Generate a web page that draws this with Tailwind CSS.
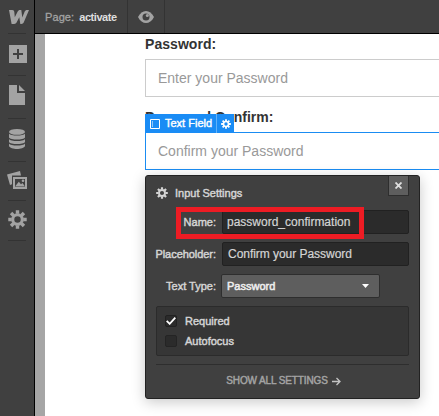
<!DOCTYPE html>
<html lang="en">
<head>
<meta charset="utf-8">
<title>Page: activate</title>
<script src="https://cdn.jsdelivr.net/npm/@tailwindcss/browser@4"></script>
</head>
<body class="w-[439px] h-[416px] overflow-hidden bg-white font-['Liberation_Sans',Arial,sans-serif]">
<svg class="hidden">
  <symbol id="gear" viewBox="0 0 20 20"><g fill="none" stroke="currentColor"><circle cx="10" cy="10" r="5" stroke-width="3.2"/><path stroke-width="3.6" d="M10 .3V4M10 16v3.7M.3 10H4M16 10h3.7M3.2 3.2l2.6 2.6M14.2 14.2l2.6 2.6M3.2 16.8l2.6-2.6M14.2 5.8l2.6-2.6"/></g></symbol>
</svg>
<div class="flex w-full h-full">
  <aside class="flex flex-col w-[35px] shrink-0 h-full bg-[#404040] border-r border-black text-[#a3a3a3]">
    <div class="h-[33px] pt-[10px] pl-[9px]">
      <svg class="w-5 h-[14px]" viewBox="0 0 20 14" fill="currentColor"><path d="M0 0h3.2c1.4 0 2 .8 2.1 2l.5 5.300L8.700 1.600C9.200.5 9.900 0 11 0h1.300l1 7.500L15.600 1.700C16.100.5 17 0 18.200 0H20l-5.200 12.300c-.5 1.200-1.300 1.700-2.500 1.700h-1L10.300 7.200 7.700 12.300C7.100 13.500 6.400 14 5.200 14H2.600z"/></svg>
    </div>
    <div class="h-px w-[18px] ml-2 bg-[#333]"></div>
    <div class="h-[41px] pt-[11px] pl-[9px]">
      <svg class="w-[18px] h-[18px]" viewBox="0 0 18 18"><path fill="currentColor" d="M0 0h18v18H0z"/><path stroke="#404040" stroke-width="2" d="M9 4v10M4 9h10"/></svg>
    </div>
    <div class="h-px w-[18px] ml-2 bg-[#333]"></div>
    <div class="h-[42px] pt-[9px] pl-[9px]">
      <svg class="w-4 h-5" viewBox="0 0 16 20" fill="currentColor"><path d="M0 0h8v8h8v12H0zM10 0l6 6h-6z"/></svg>
    </div>
    <div class="h-px w-[18px] ml-2 bg-[#333]"></div>
    <div class="h-[42px] pt-[10px] pl-[9px]">
      <svg class="w-4 h-5" viewBox="0 0 16 20" fill="currentColor"><ellipse cx="8" cy="2.900" rx="8" ry="2.900"/><path d="M0 4.500c1.500 2.800 14.500 2.800 16 0v4C14.500 11.300 1.500 11.300 0 8.500zM0 10c1.500 2.800 14.500 2.800 16 0v3c-1.500 2.800-14.500 2.800-16 0zM0 14.500c1.500 2.800 14.500 2.800 16 0V17c-1.500 4-14.500 4-16 0z"/></svg>
    </div>
    <div class="h-px w-[18px] ml-2 bg-[#333]"></div>
    <div class="h-[38px] pt-[9px] pl-[7px]">
      <svg class="w-5 h-[19px]" viewBox="0 0 20 19"><path fill="currentColor" d="M0 3.500 13 0l1 4.500H5v8.800L3 14z"/><rect x="7" y="7" width="12" height="10" fill="none" stroke="currentColor" stroke-width="2"/><path fill="currentColor" d="m8 15.500 3.800-4.800 2.200 2.500 1.500-1.200 2.500 3.500z"/><circle cx="16" cy="9.800" r="1.300" fill="currentColor"/></svg>
    </div>
    <div class="h-px w-[18px] ml-2 bg-[#333]"></div>
    <div class="h-[39px] pt-[9px] pl-2"><svg class="w-[19px] h-[19px]"><use href="#gear"/></svg></div>
    <div class="h-px w-[18px] ml-2 bg-[#333]"></div>
  </aside>
  <div class="flex flex-col flex-1 min-w-0">
    <header class="flex h-[34px] shrink-0 bg-[#404040] border-b border-black text-xs">
      <div class="flex items-center w-[93px] pl-[10px] pt-px border-r border-[#333] text-[11px] whitespace-pre"><span class="text-[#a3a3a3] tracking-[.1px] [-webkit-text-stroke:.3px]">Page:</span><span class="ml-[5px] text-[#dedede] font-bold tracking-[-.45px]">activate</span></div>
      <div class="flex items-center justify-center w-[37px] border-r border-[#333] text-[#a3a3a3]">
        <svg class="w-4 h-3" viewBox="0 0 16 12"><path fill="currentColor" d="M0 6c4-8 12-8 16 0-4 8-12 8-16 0z"/><circle cx="8" cy="6" r="3.500" fill="#404040"/><circle cx="9.300" cy="4.500" r="1.500" fill="currentColor"/></svg>
      </div>
    </header>
    <div class="flex flex-1">
      <div class="w-[10px] bg-[#a6a6a6]"></div>
      <main class="relative flex-1 pl-[100px] text-sm text-[#333]">
        <div class="h-[25px] pt-[1px] leading-[18px] font-bold tracking-[.05px]">Password:</div>
        <div class="h-[38px] border border-r-0 border-[#ccc] pl-3 leading-[36px] text-[#999]">Enter your Password</div>
        <div class="h-[35px] pt-[11px] leading-[18px] font-bold">Password Confirm:</div>
        <div class="h-[38px] border border-r-0 border-[#1a8cf2] pl-3 leading-[36px] text-[#999]">Confirm your Password</div>

        <div class="absolute left-[100px] top-[80px] flex w-[89px] h-[19px] bg-[#1a8cf5] text-white items-center text-[11px]">
          <svg class="ml-[5px] w-[10px] h-[10px]" viewBox="0 0 10 10" fill="none" stroke="#fff"><path d="M.5.5h9v9h-9z"/><path d="M2.500 2v6" stroke-opacity=".5"/></svg>
          <span class="ml-[5px] w-[51px] whitespace-nowrap [-webkit-text-stroke:.4px]">Text Field</span>
          <i class="w-px h-full bg-[#62b2fa]"></i>
          <svg class="ml-1 w-[10px] h-[10px]"><use href="#gear"/></svg>
        </div>

        <section class="absolute left-[100px] top-[141px] w-[275px] h-[224px] rounded-[3px] border border-[#222] bg-[#404040] shadow-[0_3px_14px_rgba(0,0,0,.22)] text-[#d4d4d4] text-[11px] [-webkit-text-stroke:.45px]">
          <div class="flex h-[34px] pl-[10px] pr-[10px]">
            <svg class="mt-[11px] w-3 h-3"><use href="#gear"/></svg>
            <h2 class="ml-[7px] pt-[10px] leading-[14px] flex-1">Input Settings</h2>
            <button class="flex items-center justify-center w-[21px] h-5 bg-[#5e5e5e] border border-t-0 border-[#2e2e2e]"><svg class="w-[7px] h-[7px]" viewBox="0 0 7 7"><path stroke="#e0e0e0" stroke-width="1.800" d="m.5.5 6 6M6.500.5l-6 6"/></svg></button>
          </div>
          <div class="flex h-6 mr-[10px] leading-6"><label class="w-[70px] text-right mr-[6px]">Name:</label><div class="flex-1 rounded-[2px] bg-[#2b2b2b] border border-[#212121] pl-1 text-xs leading-[22px] [-webkit-text-stroke:.2px]">password_confirmation</div></div>
          <div class="flex h-6 mt-2 mr-[10px] leading-6"><label class="w-[70px] whitespace-nowrap text-right tracking-[-.05px] mr-[6px]">Placeholder:</label><div class="flex-1 rounded-[2px] bg-[#2b2b2b] border border-[#212121] pl-[5px] text-xs leading-[22px] tracking-[-.04px] [-webkit-text-stroke:.2px]">Confirm your Password</div></div>
          <div class="flex h-6 mt-2 leading-6"><label class="w-[70px] text-right mr-[5px]">Text Type:</label><div class="flex w-[159px] items-center justify-between rounded-[2px] bg-[#5e5e5e] border border-[#2e2e2e] pl-[5px] pr-[10px] leading-[22px] text-[#eee] [-webkit-text-stroke:.5px]">Password<svg class="w-[7px] h-1" viewBox="0 0 7 4"><path fill="#fff" d="M0 0h7L3.500 4z"/></svg></div></div>
          <div class="mt-2 mx-[10px] h-[50px] rounded-[2px] border border-[#2b2b2b] bg-[#363636] pl-2 pt-2">
            <div class="flex items-center h-3"><span class="flex items-center justify-center w-3 h-3 rounded-[2px] bg-[#2b2b2b] border border-[#212121]"><svg class="w-[10px] h-2 shrink-0" viewBox="0 0 10 8"><path fill="none" stroke="#fff" stroke-width="1.800" d="m.7 3.800 3 3L9.300.7"/></svg></span><span class="ml-2 pt-px">Required</span></div>
            <div class="flex items-center h-3 mt-2"><span class="w-3 h-3 rounded-[2px] bg-[#2b2b2b] border border-[#242424]"></span><span class="ml-2 pt-px">Autofocus</span></div>
          </div>
          <div class="mt-2 mx-[10px] h-px bg-[#2e2e2e]"></div>
          <div class="flex justify-center items-center pt-[8px] pl-[2px] h-[24px] text-[#a3a3a3] text-[10px] tracking-[-.12px] whitespace-nowrap">SHOW ALL SETTINGS<svg class="ml-[4px] w-[9px] h-[9px]" viewBox="0 0 9 9"><path fill="none" stroke="#c4c4c4" stroke-width="1.300" d="M0 4.500h8M4.500 1 8 4.500 4.500 8"/></svg></div>
        </section>
        <div class="absolute left-[131px] top-[173px] w-[188px] h-[32px] border-5 border-[#ed1c24]"></div>
      </main>
    </div>
  </div>
</div>
</body>
</html>
